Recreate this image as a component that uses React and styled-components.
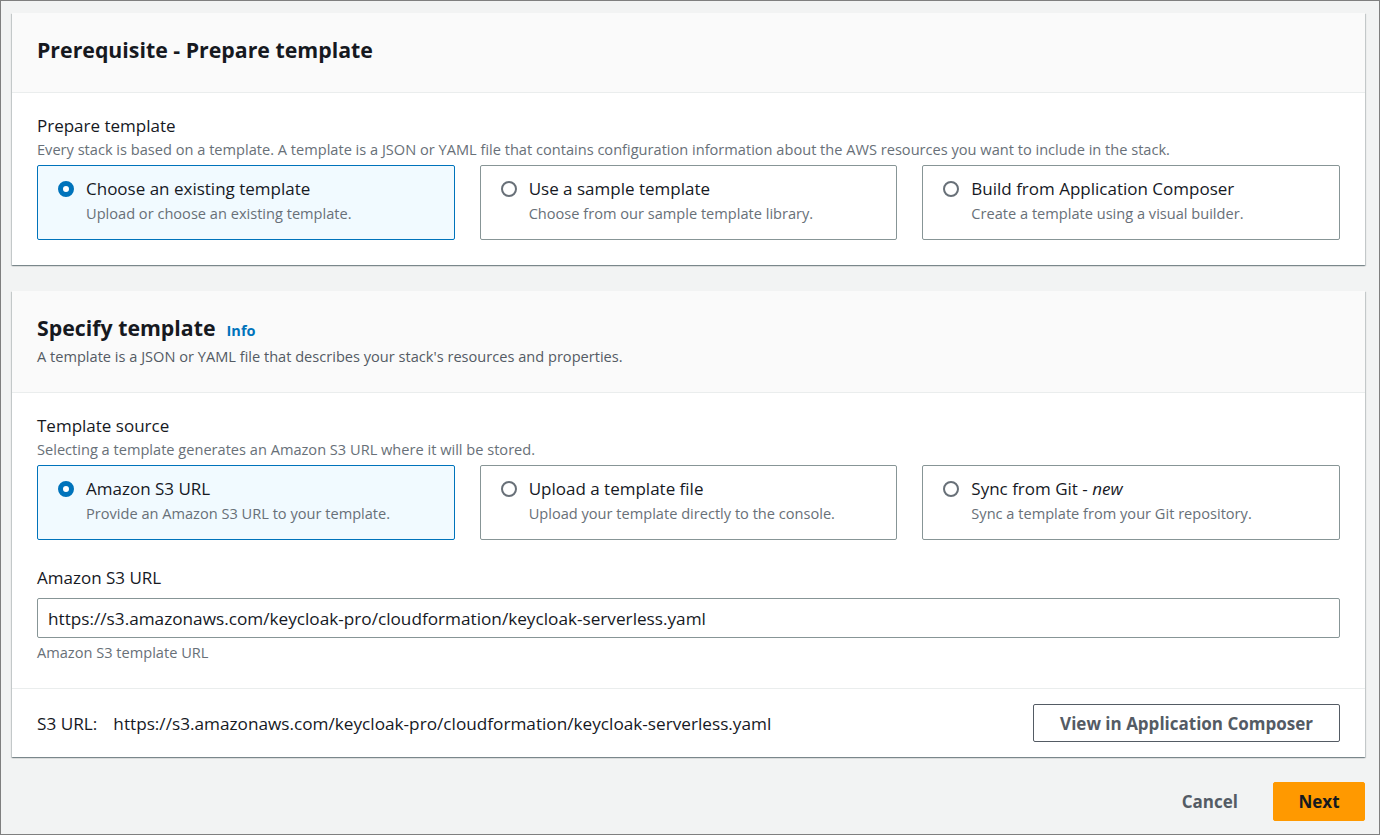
import React from 'react';
import styled, { createGlobalStyle } from 'styled-components';

const GlobalStyle = createGlobalStyle`
    html, body {
        margin: 0;
        padding: 0;
        background: #f2f3f3;
    }
    * {
        box-sizing: border-box;
    }
`

const prepareOptions = [
    { title: 'Choose an existing template', desc: 'Upload or choose an existing template.' },
    { title: 'Use a sample template', desc: 'Choose from our sample template library.' },
    { title: 'Build from Application Composer', desc: 'Create a template using a visual builder.' },
]

const sourceOptions = [
    { title: 'Amazon S3 URL', desc: 'Provide an Amazon S3 URL to your template.' },
    { title: 'Upload a template file', desc: 'Upload your template directly to the console.' },
    { title: <>Sync from Git - <em>new</em></>, desc: 'Sync a template from your Git repository.' },
]

const S3_URL = 'https://s3.amazonaws.com/keycloak-pro/cloudformation/keycloak-serverless.yaml'

function Tiles({ options, selected }) {
    return (
        <TileGrid>
            {options.map((opt, index) => (
                <Tile key={index} $active={index === selected}>
                    <Radio $active={index === selected} />
                    <div>
                        <TileTitle>{opt.title}</TileTitle>
                        <TileDesc>{opt.desc}</TileDesc>
                    </div>
                </Tile>
            ))}
        </TileGrid>
    )
}

function App() {
    return (
        <Frame>
            <GlobalStyle />
            <Card>
                <CardHeader>
                    <Title>Prerequisite - Prepare template</Title>
                </CardHeader>
                <CardBody>
                    <Label>Prepare template</Label>
                    <Hint>Every stack is based on a template. A template is a JSON or YAML file that contains configuration information about the AWS resources you want to include in the stack.</Hint>
                    <Tiles options={prepareOptions} selected={0} />
                </CardBody>
            </Card>

            <Card>
                <CardHeader $withDesc>
                    <TitleRow>
                        <Title>Specify template</Title>
                        <InfoLink>Info</InfoLink>
                    </TitleRow>
                    <HeaderDesc>A template is a JSON or YAML file that describes your stack's resources and properties.</HeaderDesc>
                </CardHeader>
                <CardBody>
                    <Label>Template source</Label>
                    <Hint>Selecting a template generates an Amazon S3 URL where it will be stored.</Hint>
                    <Tiles options={sourceOptions} selected={0} />
                    <Field>
                        <Label>Amazon S3 URL</Label>
                        <Input defaultValue={S3_URL} />
                        <Constraint>Amazon S3 template URL</Constraint>
                    </Field>
                </CardBody>
                <CardFooter>
                    <UrlText>
                        <span>S3 URL:</span>
                        <span>{S3_URL}</span>
                    </UrlText>
                    <NormalButton>View in Application Composer</NormalButton>
                </CardFooter>
            </Card>

            <Actions>
                <LinkButton>Cancel</LinkButton>
                <PrimaryButton>Next</PrimaryButton>
            </Actions>
        </Frame>
    )
}

export default App

const Frame = styled.div`
    width: 1380px;
    height: 835px;
    border: 1px solid #7f7f7f;
    background: #f2f3f3;
    padding: 12px 14px 0 11px;
    display: flex;
    flex-direction: column;
    gap: 26px;
    font-family: "Open Sans", "Noto Sans", sans-serif;
    color: #16191f;
    overflow: hidden;
`
const Card = styled.section`
    background: #fff;
    box-shadow: 0 1px 1px 0 rgba(0, 28, 36, 0.3), 1px 1px 1px 0 rgba(0, 28, 36, 0.15), -1px 1px 1px 0 rgba(0, 28, 36, 0.15);
`
const CardHeader = styled.div`
    background: #fafafa;
    border-bottom: 1px solid #eaeded;
    padding: ${p => p.$withDesc ? '22px 25px 25px' : '22px 25px 27px'};
`
const TitleRow = styled.div`
    display: flex;
    align-items: baseline;
    gap: 11px;
`
const Title = styled.h2`
    margin: 0;
    font-size: 21.3px;
    line-height: 30px;
    font-weight: 700;
    color: #16191f;
`
const InfoLink = styled.a`
    font-size: 14.5px;
    font-weight: 700;
    color: #0073bb;
    cursor: pointer;
`
const HeaderDesc = styled.p`
    margin: 2px 0 0;
    font-size: 14.6px;
    line-height: 22px;
    color: #545b64;
`
const CardBody = styled.div`
    padding: 21px 25px 25px;
`
const Label = styled.div`
    font-size: 17px;
    line-height: 24px;
    color: #16191f;
`
const Hint = styled.div`
    font-size: 14.6px;
    line-height: 22px;
    color: #687078;
    margin-bottom: 5px;
`
const TileGrid = styled.div`
    display: grid;
    grid-template-columns: repeat(3, 1fr);
    gap: 25px;
`
const Tile = styled.div`
    display: flex;
    align-items: flex-start;
    gap: 12px;
    height: 75px;
    padding: 11px 20px;
    border: 1px solid ${p => p.$active ? '#0073bb' : '#879596'};
    background: ${p => p.$active ? '#f1faff' : '#fff'};
    border-radius: 2px;
`
const Radio = styled.span`
    flex: none;
    width: 16px;
    height: 16px;
    margin-top: 4px;
    border-radius: 50%;
    background: #fff;
    border: ${p => p.$active ? '5px solid #0073bb' : '2px solid #687078'};
`
const TileTitle = styled.div`
    font-size: 17px;
    line-height: 24px;
    color: #16191f;
    em {
        font-style: italic;
    }
`
const TileDesc = styled.div`
    font-size: 14.6px;
    line-height: 22px;
    color: #687078;
    margin-top: 1px;
`
const Field = styled.div`
    margin-top: 26px;
`
const Input = styled.input`
    display: block;
    width: 100%;
    height: 40px;
    margin-top: 8px;
    padding: 0 10px;
    font-family: inherit;
    font-size: 17.2px;
    color: #16191f;
    border: 1px solid #879596;
    border-radius: 2px;
    background: #fff;
    outline: none;
`
const Constraint = styled.div`
    font-size: 14.6px;
    line-height: 20px;
    margin-top: 4px;
    margin-bottom: 1px;
    color: #687078;
`
const CardFooter = styled.div`
    display: flex;
    align-items: center;
    justify-content: space-between;
    border-top: 1px solid #eaeded;
    padding: 15px 25px;
`
const UrlText = styled.div`
    display: flex;
    gap: 16px;
    font-size: 17.2px;
    color: #16191f;
`
const NormalButton = styled.button`
    font-family: inherit;
    font-size: 17px;
    font-weight: 700;
    color: #545b64;
    background: #fff;
    border: 1px solid #545b64;
    border-radius: 2px;
    height: 38px;
    padding: 0 26px;
    cursor: pointer;
`
const Actions = styled.div`
    display: flex;
    justify-content: flex-end;
    align-items: center;
    gap: 20px;
    margin-top: -1px;
`
const LinkButton = styled.button`
    font-family: inherit;
    font-size: 17px;
    font-weight: 700;
    color: #545b64;
    background: none;
    border: none;
    padding: 0 15px;
    cursor: pointer;
`
const PrimaryButton = styled.button`
    font-family: inherit;
    font-size: 17px;
    font-weight: 700;
    color: #16191f;
    background: #ff9900;
    border: 1px solid #ff9900;
    border-radius: 2px;
    width: 92px;
    height: 39px;
    cursor: pointer;
`
